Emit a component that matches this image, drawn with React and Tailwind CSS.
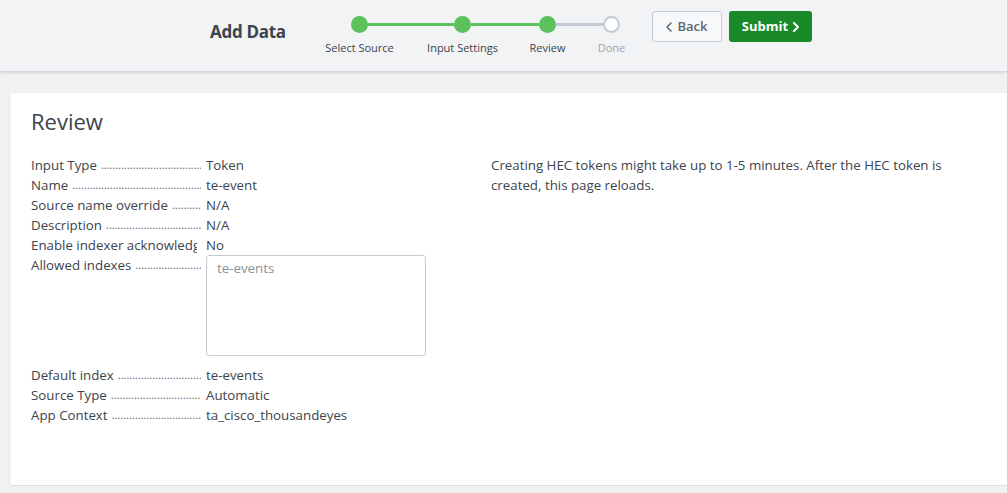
import React from 'react';

const steps = [
  { label: 'Select Source', done: true },
  { label: 'Input Settings', done: true },
  { label: 'Review', done: true },
  { label: 'Done', done: false },
];

// widths of the connector after each step
const connectors = [
  { w: 'w-[86px]', done: true },
  { w: 'w-[68px]', done: true },
  { w: 'w-[47px]', done: false },
];

const rows = [
  ['Input Type', 'Token'],
  ['Name', 'te-event'],
  ['Source name override', 'N/A'],
  ['Description', 'N/A'],
  ['Enable indexer acknowledgement', 'No'],
];

const rowsAfter = [
  ['Default index', 'te-events'],
  ['Source Type', 'Automatic'],
  ['App Context', 'ta_cisco_thousandeyes'],
];

const DOTS = '.'.repeat(200);

const Row = ({ label, children }) => (
  <div className="flex items-start leading-[20px]">
    <div className="w-[175px] shrink-0 flex overflow-hidden whitespace-nowrap pr-[5px]">
      <span className="min-w-0 overflow-hidden">{label}</span>
      <span className="flex-1 min-w-0 overflow-hidden pl-[4px] text-[11px] text-[#5c6773]">{DOTS}</span>
    </div>
    <div>{children}</div>
  </div>
);

const Chevron = ({ dir = 'right', stroke = 2 }) => (
  <svg width="6" height="10" viewBox="0 0 6 10" fill="none">
    <path
      d={dir === 'right' ? 'M1 1l4 4-4 4' : 'M5 1L1 5l4 4'}
      stroke="currentColor"
      strokeWidth={stroke}
      strokeLinecap="round"
      strokeLinejoin="round"
    />
  </svg>
);

const Stepper = () => (
  <div className="flex items-start mt-[16px]">
    {steps.map((s, i) => (
      <React.Fragment key={s.label}>
        <div className="w-[17px] flex flex-col items-center">
          {s.done ? (
            <div className="w-[17px] h-[17px] rounded-full bg-[#5cc05c]" />
          ) : (
            <div className="w-[17px] h-[17px] rounded-full bg-white border-[2.5px] border-[#c3cbd4]" />
          )}
          <div
            className={`mt-[8px] whitespace-nowrap text-[11px] leading-[14px] ${
              s.done ? 'text-[#3c444d]' : 'text-[#9aa4ae]'
            }`}
          >
            {s.label}
          </div>
        </div>
        {i < connectors.length && (
          <div
            className={`mt-[7px] h-[3px] ${connectors[i].w} ${
              connectors[i].done ? 'bg-[#5cc05c]' : 'bg-[#c3cbd4]'
            }`}
          />
        )}
      </React.Fragment>
    ))}
  </div>
);

export default function App() {
  return (
    <div
      className="w-[1007px] h-[493px] overflow-hidden bg-[#eff1f3] text-[#3c444d]"
      style={{ fontFamily: '"Open Sans", "Liberation Sans", sans-serif' }}
    >
      {/* Header */}
      <div className="h-[72px] bg-[#f2f3f5] border-b border-[#d6dae0] shadow-[0_1px_3px_rgba(0,0,0,0.12)] flex items-start">
        <div className="ml-[210px] w-[141px] mt-[20px] text-[17px] leading-[24px] font-bold tracking-[-0.3px] text-[#3c444d]">
          Add Data
        </div>
        <Stepper />
        <div className="ml-[32px] mt-[11px] flex gap-[7px]">
          <button className="w-[70px] h-[31px] rounded-[3px] border border-[#c3cbd4] bg-[#f7f8fa] text-[13px] font-semibold text-[#5c6773] flex items-center justify-center gap-[5px]">
            <Chevron dir="left" stroke={1.5} />
            Back
          </button>
          <button className="w-[83px] h-[31px] rounded-[3px] bg-[#1a8929] text-[13px] font-bold text-white flex items-center justify-center gap-[5px]">
            Submit
            <Chevron dir="right" stroke={2} />
          </button>
        </div>
      </div>

      {/* Content */}
      <div className="pt-[21px] pl-[11px]">
        <div className="w-[1010px] h-[393px] bg-white border-b border-[#dde1e6] pl-[20px] pt-[14px]">
          <h2 className="text-[22px] leading-[28px] text-[#3c444d]">Review</h2>
          <div className="mt-[20px] flex text-[13.3px]">
            <div className="w-[460px] shrink-0">
              {rows.map(([l, v]) => (
                <Row key={l} label={l}>{v}</Row>
              ))}
              <Row label="Allowed indexes">
                <div className="w-[220px] h-[101px] border border-[#c3cbd4] rounded-[3px] px-[10px] pt-[2px] text-[#8a939c]">
                  te-events
                </div>
              </Row>
              <div className="h-[9px]" />
              {rowsAfter.map(([l, v]) => (
                <Row key={l} label={l}>{v}</Row>
              ))}
            </div>
            <div className="w-[470px] leading-[20px]">
              Creating HEC tokens might take up to 1-5 minutes. After the HEC token is created, this page reloads.
            </div>
          </div>
        </div>
      </div>
    </div>
  );
}
